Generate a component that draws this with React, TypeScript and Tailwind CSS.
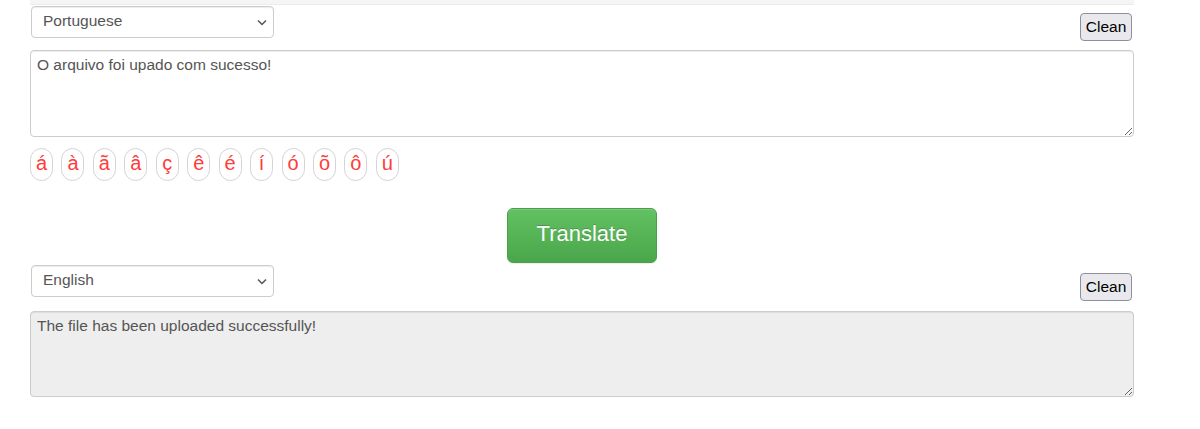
import { useState } from 'react';

const ACCENTS = ['á', 'à', 'ã', 'â', 'ç', 'ê', 'é', 'í', 'ó', 'õ', 'ô', 'ú'];

function LangSelect({ value, options }: { value: string; options: string[] }) {
  return (
    <div className="relative w-[243px] h-[32px]">
      <select
        defaultValue={value}
        className="appearance-none w-full h-full rounded-[4px] border border-[#ccc] bg-white pl-[11px] pr-8 pb-[2px] text-[15.5px] text-[#555] shadow-[inset_0_1px_1px_rgba(0,0,0,0.075)] outline-none"
      >
        {options.map((o) => (
          <option key={o}>{o}</option>
        ))}
      </select>
      <svg
        className="pointer-events-none absolute right-[7px] top-[13px] w-[10px] h-[7px]"
        viewBox="0 0 10 7"
        fill="none"
        stroke="#555"
        strokeWidth={1.5}
      >
        <path d="M1 1.5l4 4 4-4" />
      </svg>
    </div>
  );
}

function CleanButton({ onClick }: { onClick?: () => void }) {
  return (
    <button
      onClick={onClick}
      className="h-[28px] w-[52px] rounded-[4px] border border-[#8f8f9d] bg-[#e9e9ed] text-[15.5px] text-black leading-none"
    >
      Clean
    </button>
  );
}

export default function App() {
  const [source, setSource] = useState('O arquivo foi upado com sucesso!');
  const languages = ['Portuguese', 'English', 'Spanish', 'French'];

  return (
    <div className="min-h-screen bg-white font-['Liberation_Sans',Arial,sans-serif]">
      <div className="ml-[30px] w-[1104px]">
        {/* Top strip */}
        <div className="h-[5px] bg-[#f5f5f5] border-b border-[#ececec]" />

        {/* Source language row */}
        <div className="mt-[1px] flex items-start justify-between">
          <div className="ml-[1px]">
            <LangSelect value="Portuguese" options={languages} />
          </div>
          <div className="mt-[7px] mr-[2px]">
            <CleanButton onClick={() => setSource('')} />
          </div>
        </div>

        <textarea
          value={source}
          onChange={(e) => setSource(e.target.value)}
          className="mt-[9px] block w-full h-[87px] rounded-[4px] border border-[#ccc] bg-white px-[6px] py-[4px] text-[15.5px] leading-[20px] text-[#555] shadow-[inset_0_1px_1px_rgba(0,0,0,0.075)] outline-none"
        />

        {/* Accent keys */}
        <div className="mt-[11px] flex gap-[8.45px]">
          {ACCENTS.map((c) => (
            <button
              key={c}
              onClick={() => setSource(source + c)}
              className="w-[23px] h-[33px] shrink-0 rounded-full border border-[#d4d4d4] bg-white text-[20px] leading-none text-[#ff3b3b] flex items-center justify-center pb-[3px]"
            >
              {c}
            </button>
          ))}
        </div>

        {/* Translate */}
        <div className="mt-[27px] flex justify-center">
          <button className="w-[150px] h-[55px] rounded-[6px] border border-[#4a9f4a] bg-gradient-to-b from-[#62c162] to-[#4aa64a] pb-[5px] text-[22px] text-white [text-shadow:0_-1px_0_rgba(0,0,0,0.2)] shadow-[inset_0_1px_0_rgba(255,255,255,0.15),0_1px_1px_rgba(0,0,0,0.075)]">
            Translate
          </button>
        </div>

        {/* Target language row */}
        <div className="mt-[2px] flex items-start justify-between">
          <div className="ml-[1px]">
            <LangSelect value="English" options={languages} />
          </div>
          <div className="mt-[8px] mr-[2px]">
            <CleanButton />
          </div>
        </div>

        <textarea
          readOnly
          value="The file has been uploaded successfully!"
          className="mt-[10px] block w-full h-[86px] rounded-[4px] border border-[#ccc] bg-[#eee] px-[6px] py-[4px] text-[15.5px] leading-[20px] text-[#555] shadow-[inset_0_1px_1px_rgba(0,0,0,0.075)] outline-none"
        />
      </div>
    </div>
  );
}
